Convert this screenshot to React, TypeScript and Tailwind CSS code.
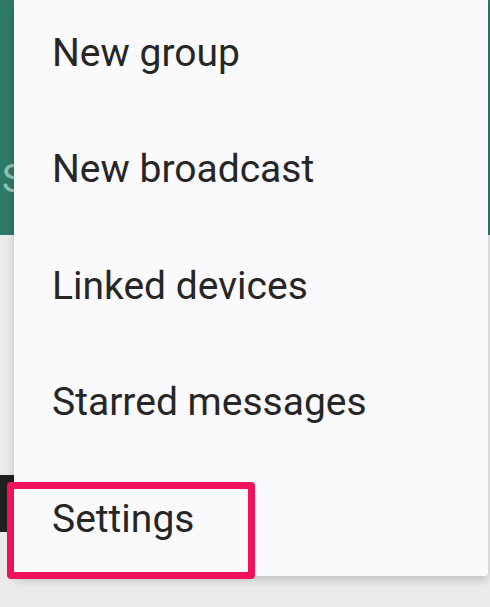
import React from 'react';

const items = ['New group', 'New broadcast', 'Linked devices', 'Starred messages', 'Settings'];

const App: React.FC = () => (
  <div className="relative h-[607px] w-[490px] overflow-hidden bg-[#ebebeb] font-['Roboto',sans-serif]">
    {/* app behind the menu */}
    <div className="flex h-[235px] items-start bg-[#2e7a68]">
      <span className="ml-[2px] mt-[160px] text-[38px] leading-none text-[#8fc4b2]">S</span>
    </div>
    <div className="mt-[240px] h-[57px] w-[15px] bg-[#1f1f1f]" />

    {/* overflow menu */}
    <div className="absolute left-[14px] top-0 h-[576px] w-[474px] rounded-b-[4px] bg-[#faf9fb] shadow-[0_4px_10px_rgba(0,0,0,0.18)]">
      <ul className="-mt-[5px] pl-[38px]">
        {items.map((item) => (
          <li key={item} className="flex h-[116.5px] items-center text-[39px] leading-none text-[#262626]">
            {item}
          </li>
        ))}
      </ul>
    </div>

    {/* highlight */}
    <div className="absolute left-[7px] top-[482px] h-[97px] w-[248px] rounded-[4px] border-[7px] border-[#f2115d]" />
  </div>
);

export default App;
